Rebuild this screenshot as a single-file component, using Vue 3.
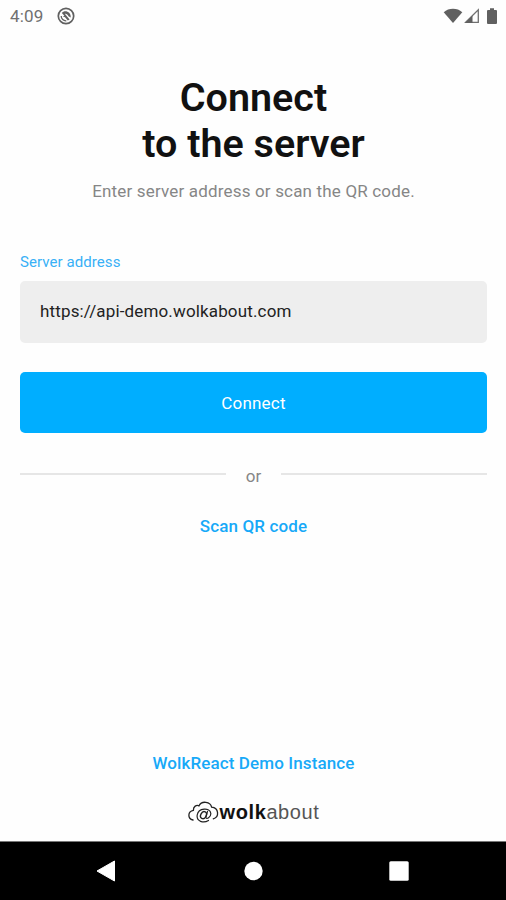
<template>
  <div class="screen">
    <header class="status-bar">
      <span class="time">{{ time }}</span>
      <svg class="app-icon" width="18" height="18" viewBox="0 0 18 18">
        <circle cx="9" cy="9" r="7.700" fill="none" stroke="#606060" stroke-width="1.700" />
        <path d="M4.800 6C7.500 2.600 14.200 4.600 13.700 10.400L11.500 9.200C10.800 7.400 9.500 6.500 7.800 6.700L12.600 12.600L10.800 13.600L8 10.300L5.700 9.300L7.400 8.700Z" fill="#606060" />
        <path d="M4.200 9C4.200 12 6.500 14 9.300 13.800" fill="none" stroke="#606060" stroke-width="1.300" />
      </svg>
      <div class="status-icons">
        <svg width="20" height="16" viewBox="0 0 20 16">
          <path d="M10 15L.7 4.200Q4.700.8 10 .8T19.300 4.200Z" fill="#606060" />
        </svg>
        <svg class="signal" width="16" height="16" viewBox="0 0 16 16">
          <path d="M1.700 14.300L14.300 1.700V14.300Z" fill="none" stroke="#707070" stroke-width="1.300" />
          <path d="M1 15L8.500 7.500V15Z" fill="#606060" />
        </svg>
        <svg class="battery" width="10" height="16" viewBox="0 0 10 16">
          <path d="M3 .3H7V2H9Q10 2 10 3V15Q10 16 9 16H1Q0 16 0 15V3Q0 2 1 2H3Z" fill="#606060" />
        </svg>
      </div>
    </header>

    <main class="content">
      <h1 class="title">Connect<br />to the server</h1>
      <p class="subtitle">Enter server address or scan the QR code.</p>

      <label class="label" for="server">Server address</label>
      <input id="server" v-model="address" class="address" type="text" spellcheck="false" />
      <button class="connect" type="button">Connect</button>

      <div class="divider"><span>or</span></div>
      <a class="link">Scan QR code</a>

      <footer class="footer">
        <a class="link instance">WolkReact Demo Instance</a>
        <div class="logo">
          <svg width="32" height="22" viewBox="0 0 32 22" fill="none" stroke="#222" stroke-linecap="round">
            <path d="M5 19C-.8 17.500-.3 10.300 5.400 9.300C5.200 5.500 8.500 3.500 11 4.800C13.500-.5 22.500.4 23.600 6.200C31 7 31.500 16 25.300 17.800" stroke-width="1.300" />
            <ellipse cx="15.500" cy="14.200" rx="2.700" ry="3.700" transform="rotate(28 15.500 14.200)" stroke-width="1.400" />
            <path d="M19.500 10.300L17.800 16.500C18.200 18.600 23.200 16.300 22.800 12.300C22 6.300 10.500 6.500 9.200 14C8.200 20.600 15.500 22.500 20.500 19.500" stroke-width="1.200" />
          </svg>
          <span class="brand"><b>wolk</b><span>about</span></span>
        </div>
      </footer>
    </main>

    <nav class="nav-bar">
      <svg width="20" height="22" viewBox="0 0 20 22"><path d="M1 11L18.500 1V21Z" fill="#fff" stroke="#fff" stroke-linejoin="round" /></svg>
      <svg width="20" height="20" viewBox="0 0 20 20"><circle cx="10.500" cy="10" r="9.200" fill="#fff" /></svg>
      <svg width="20" height="20" viewBox="0 0 20 20"><rect x=".3" y=".3" width="19.400" height="19.400" rx="1.500" fill="#fff" /></svg>
    </nav>
  </div>
</template>

<script setup>
import { ref } from 'vue'

const time = ref('4:09')
const address = ref('https://api-demo.wolkabout.com')
</script>

<style>
body {
  margin: 0;
}
</style>

<style scoped>
.screen {
  display: flex;
  flex-direction: column;
  width: 506px;
  height: 900px;
  overflow: hidden;
  background: #fefefe;
  font-family: Roboto, sans-serif;
  color: #111;
}

.status-bar {
  display: flex;
  align-items: center;
  box-sizing: border-box;
  height: 31px;
  padding: 0 9px 0 10px;
}

.time {
  width: 47px;
  font-size: 17px;
  letter-spacing: 0.2px;
  color: #707070;
}

.status-icons {
  display: flex;
  align-items: center;
  margin-left: auto;
}

.signal {
  margin-left: 1px;
}

.battery {
  margin-left: 7px;
}

.content {
  display: flex;
  flex: 1;
  flex-direction: column;
  padding: 44px 19px 0 20px;
  text-align: center;
}

.title {
  margin: 0;
  font-size: 39.5px;
  font-weight: 600;
  line-height: 46px;
}

.subtitle {
  margin: 12px 0 0;
  font-size: 17px;
  line-height: 24px;
  letter-spacing: 0.17px;
  color: #868686;
}

.label {
  margin-top: 49px;
  font-size: 15px;
  line-height: 20px;
  letter-spacing: 0.07px;
  text-align: left;
  color: #38b0f6;
}

.address {
  box-sizing: border-box;
  height: 62px;
  margin-top: 9px;
  padding: 0 20px 2px;
  border: 0;
  border-radius: 5px;
  outline: 0;
  background: #eee;
  font: 17px Roboto, sans-serif;
  letter-spacing: 0.15px;
  color: #222;
}

.connect {
  height: 61px;
  margin-top: 29px;
  padding: 0;
  border: 0;
  border-radius: 5px;
  background: #00aeff;
  font: 17px Roboto, sans-serif;
  letter-spacing: 0.2px;
  color: #fff;
}

.divider {
  display: flex;
  align-items: center;
  height: 20px;
  margin-top: 31px;
  font-size: 17px;
  color: #868686;
}

.divider::before,
.divider::after {
  flex: 1;
  height: 2px;
  background: #e6e6e6;
  content: '';
}

.divider span {
  width: 55px;
  padding-top: 4px;
}

.link {
  margin-top: 32px;
  font-size: 17px;
  font-weight: 500;
  line-height: 20px;
  letter-spacing: 0.12px;
  color: #17a9f8;
}

.footer {
  display: flex;
  flex-direction: column;
  align-items: center;
  margin-top: auto;
  padding-bottom: 18px;
}

.instance {
  margin-top: 0;
}

.logo {
  display: flex;
  align-items: center;
  margin-top: 28px;
}

.brand {
  font-family: 'Liberation Sans', sans-serif;
  font-size: 20px;
  line-height: 22px;
  letter-spacing: 0.6px;
}

.brand span {
  color: #555;
}

.nav-bar {
  display: flex;
  align-items: center;
  justify-content: space-between;
  box-sizing: border-box;
  height: 59px;
  padding: 0 97px 0 96px;
  border-top: 1px solid #777;
  background: #000;
}
</style>
